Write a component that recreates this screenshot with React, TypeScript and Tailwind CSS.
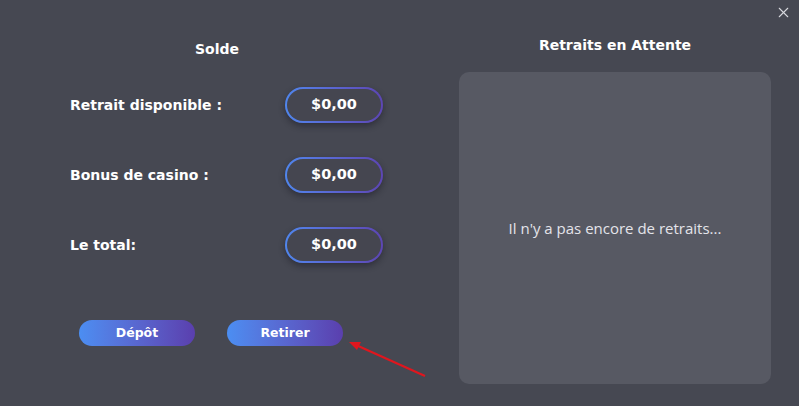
import { X } from "lucide-react";

const rows = [
  { label: "Retrait disponible :", value: "$0,00" },
  { label: "Bonus de casino :", value: "$0,00" },
  { label: "Le total:", value: "$0,00" },
];

function Pill({ value }: { value: string }) {
  return (
    <div className="rounded-full bg-gradient-to-r from-[#4f86ee] to-[#5c45b4] p-[2px] shadow-[0_3px_6px_rgba(20,20,30,0.45)]">
      <div className="flex h-[32px] w-[94px] items-center justify-center rounded-full bg-[#454650] text-[14.5px] font-bold text-white">
        {value}
      </div>
    </div>
  );
}

function GradientButton({ children }: { children: React.ReactNode }) {
  return (
    <button className="flex h-[26px] w-[116px] items-center justify-center rounded-full bg-gradient-to-r from-[#4b8ef2] to-[#5a3fae] text-[12.5px] font-bold text-white">
      {children}
    </button>
  );
}

export default function App() {
  return (
    <div
      className="relative flex h-[406px] w-[799px] overflow-hidden bg-[#464852] text-white"
      style={{ fontFamily: '"DejaVu Sans", "Open Sans", sans-serif' }}
    >
      {/* Balance */}
      <div className="flex w-[434px] flex-col">
        <h2 className="mt-[39px] text-center text-[14px] font-bold">Solde</h2>
        <div className="mt-[27px] flex flex-col gap-[34px] pl-[70px]">
          {rows.map((r) => (
            <div key={r.label} className="flex items-center">
              <span className="w-[215px] text-[14px] font-bold">{r.label}</span>
              <Pill value={r.value} />
            </div>
          ))}
        </div>
        <div className="mt-[57px] flex gap-[32px] pl-[79px]">
          <GradientButton>Dépôt</GradientButton>
          <GradientButton>Retirer</GradientButton>
        </div>
      </div>

      {/* Pending withdrawals */}
      <div className="ml-[25px] flex w-[312px] flex-col">
        <h2 className="mt-[35px] text-center text-[14px] font-bold">Retraits en Attente</h2>
        <div className="mt-[16px] flex h-[312px] items-center justify-center rounded-[10px] bg-[#575963]">
          <p className="text-[15px] text-[#e4e4ea]" style={{ fontFamily: '"Open Sans", sans-serif' }}>
            Il n'y a pas encore de retraits...
          </p>
        </div>
      </div>

      <button className="absolute right-[7px] top-[4px] text-[#d8d9df]">
        <X size={17} strokeWidth={1.5} />
      </button>

      <svg className="pointer-events-none absolute left-0 top-0" width="799" height="406">
        <line x1="425" y1="376" x2="356" y2="345" stroke="#e0161e" strokeWidth="2.2" />
        <polygon points="349,342 361,342 357,350" fill="#e0161e" />
      </svg>
    </div>
  );
}
